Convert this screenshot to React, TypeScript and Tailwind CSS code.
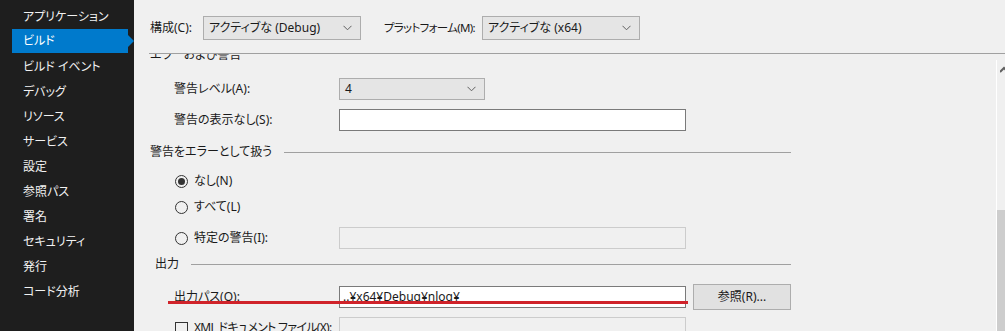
import React from "react";

const FONT = "[font-family:'Noto_Sans','Noto_Sans_CJK_JP',sans-serif] [font-feature-settings:'palt']";

function Chevron() {
  return (
    <svg width="9" height="6" viewBox="0 0 9 6" className="shrink-0">
      <path d="M0.5 0.8 L4.5 4.8 L8.5 0.8" fill="none" stroke="#606060" strokeWidth="1" />
    </svg>
  );
}

function Select({ text, w, h }: { text: string; w: string; h: string }) {
  return (
    <div className={`${w} ${h} flex shrink-0 items-center justify-between border border-[#adadad] bg-[#e5e5e5] pl-[5px] pr-[8px]`}>
      <span>{text}</span>
      <Chevron />
    </div>
  );
}

function Heading({ text, noLine, w = "w-[641px]" }: { text: string; noLine?: boolean; w?: string }) {
  return (
    <div className={`flex h-[24px] ${w} items-center`}>
      <span className="shrink-0">{text}</span>
      {!noLine && <div className="ml-[12px] h-px flex-1 bg-[#a0a0a0]" />}
    </div>
  );
}

function Radio({ checked, label }: { checked?: boolean; label: string }) {
  return (
    <div className="flex h-[20px] items-center pl-[25px]">
      <div className="flex h-[13px] w-[13px] items-center justify-center rounded-full border border-[#333333] bg-[#f0f0f0]">
        {checked && <div className="h-[7px] w-[7px] rounded-full bg-[#333333]" />}
      </div>
      <span className="ml-[6px] whitespace-nowrap">{label}</span>
    </div>
  );
}

const sidebarItems = [
  "アプリケーション",
  "ビルド",
  "ビルド イベント",
  "デバッグ",
  "リソース",
  "サービス",
  "設定",
  "参照パス",
  "署名",
  "セキュリティ",
  "発行",
  "コード分析",
];

export default function App() {
  return (
    <div className={`flex h-[331px] w-[1005px] overflow-hidden text-[12px] leading-none text-[#1a1a1a] ${FONT}`}>
      {/* Sidebar */}
      <div className="w-[134px] shrink-0 bg-[#1e1e1e] pt-[4px]">
        {sidebarItems.map((item, i) =>
          i === 1 ? (
            <div key={item} className="relative ml-[12px] flex h-[24px] w-[116px] items-center bg-[#007acc] pl-[11px] text-white">
              {item}
              <div className="absolute right-[-6px] top-[6px] h-0 w-0 border-y-[6px] border-l-[6px] border-y-transparent border-l-[#007acc]" />
            </div>
          ) : (
            <div key={item} className={`ml-[12px] flex h-[25px] items-center pl-[11px] text-[#f1f1f1] ${i === 2 ? "mt-px" : ""}`}>
              {item}
            </div>
          )
        )}
      </div>

      {/* Main */}
      <div className="flex min-w-0 flex-1 flex-col bg-[#f0f0f0]">
        <div className="flex h-[53px] shrink-0 items-center pl-[16px] pt-[3px]">
          <span className="w-[53px] shrink-0 whitespace-nowrap">構成(C):</span>
          <Select text="アクティブな (Debug)" w="w-[158px]" h="h-[24px]" />
          <span className="ml-[23px] w-[98px] shrink-0 whitespace-nowrap text-[11.5px] tracking-[-0.7px]">プラットフォーム(M):</span>
          <Select text="アクティブな (x64)" w="w-[158px]" h="h-[24px]" />
        </div>
        <div className="ml-[15px] h-px shrink-0 bg-[#a0a0a0]" />

        <div className="relative flex min-h-0 flex-1">
          <div className="min-w-0 flex-1 overflow-hidden">
            <div className="relative mt-[-11px] pl-[16px]">
              <Heading text="エラーおよび警告" noLine />

              <div className="mt-[11px] flex h-[22px] items-center pl-[24px]">
                <span className="w-[165px]">警告レベル(A):</span>
                <Select text="4" w="w-[146px]" h="h-[22px]" />
              </div>

              <div className="mt-[9px] flex h-[22px] items-center pl-[24px]">
                <span className="w-[165px]">警告の表示なし(S):</span>
                <div className="h-[22px] w-[347px] border border-[#7a7a7a] bg-white" />
              </div>

              <div className="mt-[9px]">
                <Heading text="警告をエラーとして扱う" />
              </div>

              <div className="mt-[7px]">
                <Radio checked label="なし(N)" />
              </div>
              <div className="mt-[6px]">
                <Radio label="すべて(L)" />
              </div>

              <div className="mt-[10px] flex h-[22px] items-center">
                <div className="w-[189px] shrink-0">
                  <Radio label="特定の警告(I):" />
                </div>
                <div className="h-[22px] w-[347px] border border-[#cccccc] bg-[#f0f0f0]" />
              </div>

              <div className="mt-[3px] pl-[5px]">
                <Heading text="出力" w="w-[636px]" />
              </div>

              <div className="relative mt-[8px] flex h-[26px] items-center pl-[24px]">
                <span className="w-[165px]">出力パス(O):</span>
                <div className="flex h-[22px] w-[347px] items-center border border-[#7a7a7a] bg-white pl-[3px]">
                  ..¥x64¥Debug¥nlog¥
                </div>
                <div className="ml-[7px] flex h-[26px] w-[98px] items-center justify-center border border-[#adadad] bg-[#e1e1e1]">
                  参照(R)...
                </div>
                <div className="absolute left-[18px] top-[17px] h-[3px] w-[520px] bg-[#d0232a]" />
              </div>

              <div className="mt-[7px] flex h-[22px] items-center">
                <div className="flex w-[189px] shrink-0 items-center pl-[25px]">
                  <div className="h-[13px] w-[13px] shrink-0 border border-[#333333] bg-[#f0f0f0]" />
                  <span className="ml-[6px] whitespace-nowrap tracking-[-0.7px]">XML ドキュメント ファイル(X):</span>
                </div>
                <div className="h-[22px] w-[347px] border border-[#cccccc] bg-[#f0f0f0]" />
              </div>
            </div>
          </div>

          {/* Scrollbar */}
          <div className="mt-[6px] flex w-[9px] shrink-0 flex-col border-l border-white bg-[#f0f0f0]">
            <div className="relative h-[150px]">
              <svg width="8" height="8" viewBox="0 0 8 8" className="absolute left-[3px] top-[6px]">
                <path d="M0 6 L4 2 L8 6" fill="none" stroke="#606060" strokeWidth="2" />
              </svg>
            </div>
            <div className="flex-1 bg-[#cdcdcd]" />
          </div>
        </div>
      </div>
    </div>
  );
}
